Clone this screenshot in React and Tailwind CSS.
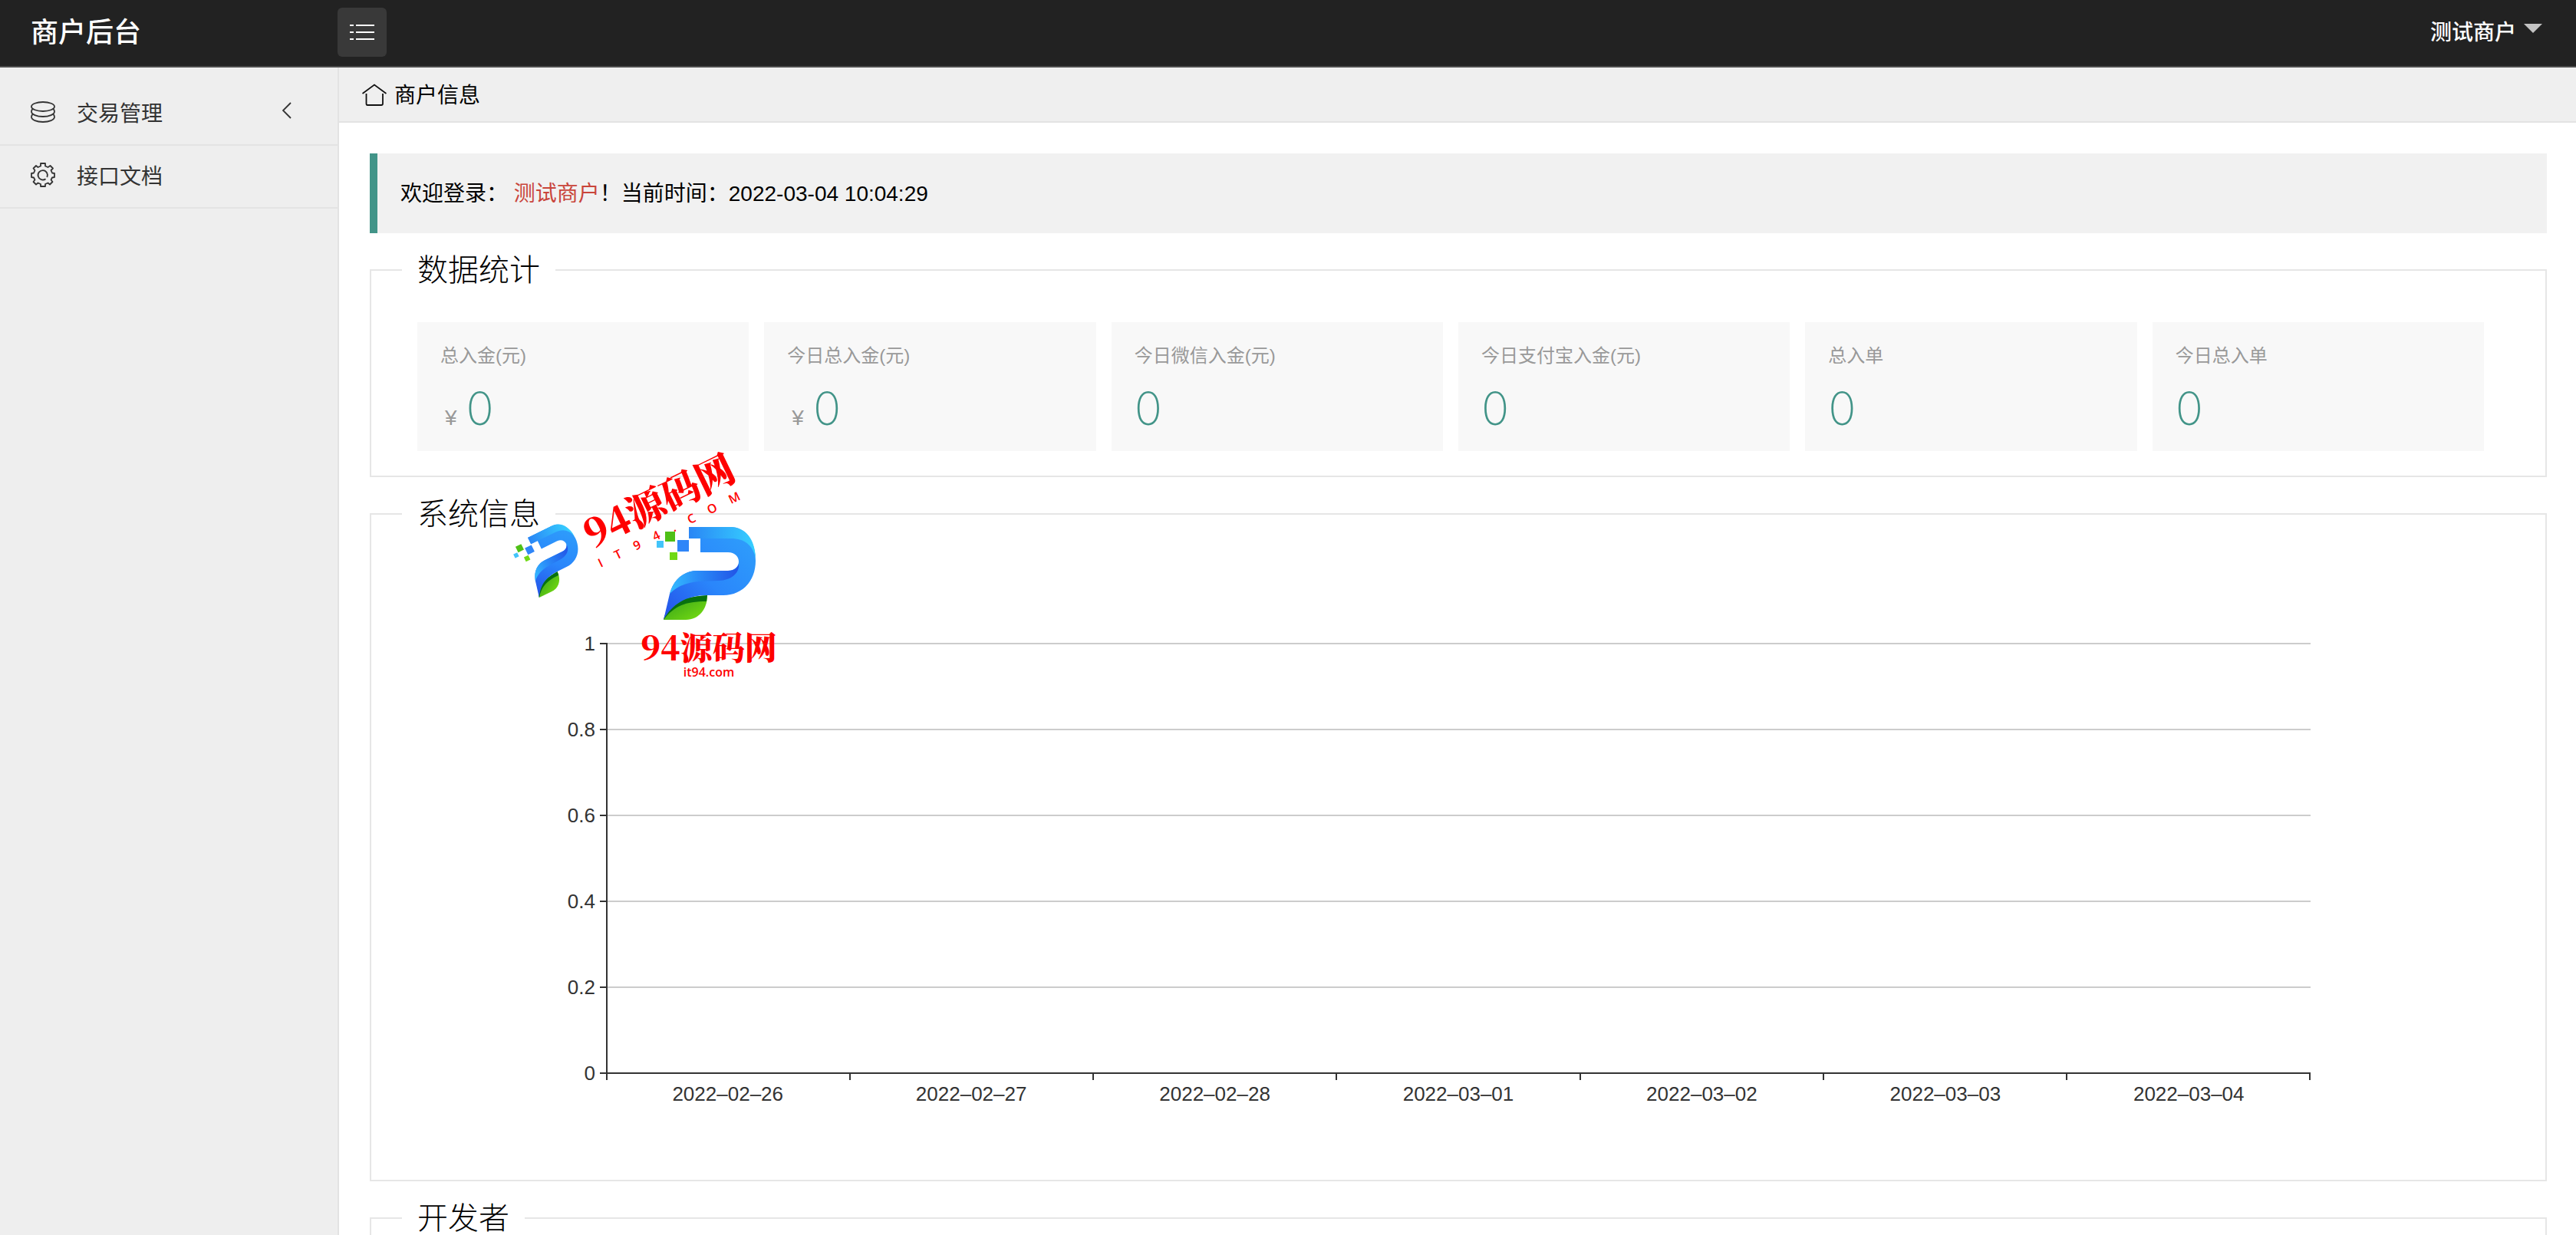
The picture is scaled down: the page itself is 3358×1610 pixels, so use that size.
const cards = [
  { label: '总入金(元)', value: '0', yen: true },
  { label: '今日总入金(元)', value: '0', yen: true },
  { label: '今日微信入金(元)', value: '0' },
  { label: '今日支付宝入金(元)', value: '0' },
  { label: '总入单', value: '0' },
  { label: '今日总入单', value: '0' },
];

const yTicks = ['1', '0.8', '0.6', '0.4', '0.2', '0'];
const days = ['2022–02–26', '2022–02–27', '2022–02–28', '2022–03–01', '2022–03–02', '2022–03–03', '2022–03–04'];

function DatabaseIcon() {
  return (
    <svg viewBox="0 0 32 28" className="mb-1 h-7 w-8" fill="none" stroke="#333" strokeWidth="1.8">
      <ellipse cx="16" cy="7" rx="15" ry="6" />
      <path d="M2.500 10C1.500 11 1 12 1 13.500 1 17 7.700 20 16 20s15-3 15-6.500c0-1.500-.5-2.500-1.500-3.500" />
      <path d="M2.500 17C1.500 18 1 19 1 20.500 1 24.200 7.700 27 16 27s15-2.800 15-6.500c0-1.500-.5-2.500-1.500-3.500" />
    </svg>
  );
}

function GearIcon() {
  return (
    <svg viewBox="0 0 32 32" className="mb-1 size-8" fill="none" stroke="#333" strokeWidth="1.8" strokeLinejoin="round">
      <path d="M13 1h6v3.500l3.500 1.500L25.500 4 29 7.500 26.500 10l1.500 3.500 3 .5v5l-3 .5-1.500 3L28.500 25 25 28.500 22.500 26.500 19 28v3h-6v-3l-3.500-1.500L7 28.500 3.500 25l2-2.500L4 19.500 1 19v-5l3-.5L5.500 10 3.500 7.500 7 4l2.500 2L13 4.500z" />
      <path d="M19.500 21.200A6.200 6.200 0 1 1 21.300 19" />
    </svg>
  );
}

function HomeIcon() {
  return (
    <svg viewBox="0 0 32 29" className="h-[29px] w-8" fill="none" stroke="#111" strokeWidth="1.800">
      <path d="M.5 13 16 1.500 31.500 13" />
      <path d="M5.500 13v13q0 2 1.500 2h18q2 0 2-2V13" />
    </svg>
  );
}

function LogoMark({ className }) {
  return (
    <svg viewBox="0 0 132 124" className={className} aria-hidden="true">
      <defs>
        <linearGradient id="bow" x1="0" y1="1" x2="1" y2="0">
          <stop offset="0" stopColor="#2450e8" />
          <stop offset=".45" stopColor="#2a86fb" />
          <stop offset="1" stopColor="#2fa2fb" />
        </linearGradient>
        <linearGradient id="shine" x1="0" y1="0" x2="1" y2="0">
          <stop offset="0" stopColor="#2a86f5" />
          <stop offset="1" stopColor="#36d0ff" />
        </linearGradient>
        <linearGradient id="fold" x1="0" y1="0" x2="1" y2="0">
          <stop offset="0" stopColor="#35bdff" />
          <stop offset=".4" stopColor="#2a8df8" />
          <stop offset="1" stopColor="#2253e6" />
        </linearGradient>
        <linearGradient id="leaf" x1="0" y1="0" x2="1" y2="1">
          <stop offset="0" stopColor="#2f9a1c" />
          <stop offset="1" stopColor="#79e010" />
        </linearGradient>
      </defs>
      <path d="M9 121C16 99 30 92 66 89c0 18-11 32-28 32z" fill="url(#leaf)" />
      <path d="M9 121c5-19 16-29 57-32l-1 8c-28 0-42 6-56 24z" fill="#08700f" />
      <path d="M42 0h54c20 0 33 18 33 44 0 27-18 45-42 45H66C38 89 20 101 9 121l8-34c5-19 19-30 36-30h40c9 0 14-6 14-12s-5-12-14-12H57V15H42z" fill="url(#bow)" />
      <path d="M42 0h54c20 0 32 16 33 40-4-16-14-25-32-25H42z" fill="url(#shine)" />
      <path d="M17 87c5-19 19-30 36-30h40c9 0 13-5 14-9 1 12-9 21-26 22-24 1-46-1-64 17z" fill="url(#fold)" />
      <rect x="27" y="17" width="15" height="15" fill="#2f86f8" />
      <rect x="11" y="6" width="13" height="13" fill="#4fc016" />
      <rect x="0" y="18" width="9" height="9" fill="#42c4fa" />
      <rect x="17" y="33" width="10" height="10" fill="#70d916" />
    </svg>
  );
}

function Watermark() {
  return (
    <div className="pointer-events-none absolute left-[184px] top-[-68px] h-[320px] w-[360px] font-['Noto_Serif_CJK_SC','Noto_Sans_CJK_SC',serif] text-[#fe0000]">
      <LogoMark className="absolute left-[190px] top-[107px] w-[132px]" />
      <LogoMark className="absolute left-[11px] top-[110px] w-[84px] -rotate-[26deg]" />
      <div className="absolute left-[86px] top-[46px] -rotate-[26deg] whitespace-nowrap text-[50px] leading-[48px] font-black">
        94源码网
      </div>
      <div className="absolute left-[104px] top-[100px] flex w-[204px] -rotate-[26deg] justify-between font-['Open_Sans',sans-serif] text-base leading-5 font-semibold">
        {'IT94.COM'.split('').map((c, i) => (
          <span key={i}>{c}</span>
        ))}
      </div>
      <div className="absolute left-[158px] top-[236px] w-[200px] text-center">
        <div className="whitespace-nowrap text-[42px] leading-[52px] font-black">94源码网</div>
        <div className="font-['Open_Sans',sans-serif] text-base leading-4 font-semibold">it94.com</div>
      </div>
    </div>
  );
}

function Panel({ title, className, children }) {
  return (
    <fieldset className={'min-w-0 border-2 border-[#e6e6e6] px-10 ' + className}>
      <legend className="px-5 text-[40px] leading-[44px] font-light text-black">{title}</legend>
      {children}
    </fieldset>
  );
}

function Chart() {
  return (
    <div className="px-[266px] pt-[146px] pb-24">
      <div className="relative h-[562px] border-l-2 border-[#333]">
        <div className="flex h-full flex-col justify-between">
          {yTicks.map((t) => (
            <div key={t} className="flex h-0.5 items-center">
              <div className={'h-0.5 flex-1 ' + (t === '0' ? 'bg-[#333]' : 'bg-[#ccc]')} />
            </div>
          ))}
        </div>
        <div className="absolute inset-y-0 right-full flex flex-col justify-between">
          {yTicks.map((t) => (
            <div key={t} className="flex h-0.5 items-center justify-end gap-1.5">
              <span>{t}</span>
              <span className="h-0.5 w-2.5 bg-[#333]" />
            </div>
          ))}
        </div>
      </div>
      <div className="flex border-l-2 border-[#333]">
        {days.map((d) => (
          <div key={d} className="flex h-2 flex-1 justify-end">
            <span className="w-0.5 bg-[#333]" />
          </div>
        ))}
      </div>
      <div className="flex pt-0.5">
        {days.map((d) => (
          <div key={d} className="flex-1 text-center leading-8">{d}</div>
        ))}
      </div>
    </div>
  );
}

export default function App() {
  return (
    <div className="flex h-screen flex-col overflow-hidden bg-white font-['Liberation_Sans','Noto_Sans_CJK_SC',sans-serif] text-[28px] text-black">
      <header className="flex h-[88px] shrink-0 items-center border-b-2 border-[#4d4d4d] bg-[#222] font-medium text-white">
        <h1 className="w-[440px] pl-10 text-4xl">商户后台</h1>
        <button aria-label="菜单" className="mb-0.5 flex size-16 items-center justify-center rounded-md bg-[#393939]">
          <svg viewBox="0 0 32 22" className="h-[22px] w-8" stroke="#fff" strokeWidth="2">
            <path d="M0 2h5M8 2h24M0 11h5M8 11h24M0 20h5M8 20h24" />
          </svg>
        </button>
        <button className="mr-11 ml-auto flex items-center gap-2.5">
          测试商户
          <svg viewBox="0 0 24 12" className="mb-3 h-3 w-6"><path d="M0 0h24L12 12z" fill="#c3c3c3" /></svg>
        </button>
      </header>
      <div className="flex min-h-0 flex-1">
        <nav className="w-[442px] shrink-0 border-r-2 border-[#e3e3e3] bg-[#eee] pt-5 text-[#333]">
          <a href="#trade" className="flex h-[82px] items-center gap-7 border-b-2 border-[#e3e3e3] pl-10">
            <DatabaseIcon />
            <span className="pt-0.5">交易管理</span>
            <svg viewBox="0 0 12 22" className="mr-[60px] mb-2 ml-auto h-[22px] w-3" fill="none" stroke="#333" strokeWidth="1.8"><path d="M11 1 1 11l10 10" /></svg>
          </a>
          <a href="#docs" className="flex h-[82px] items-center gap-7 border-b-2 border-[#e3e3e3] pl-10">
            <GearIcon />
            <span className="pt-0.5">接口文档</span>
          </a>
        </nav>
        <main className="flex min-w-0 flex-1 flex-col">
          <div className="flex h-[72px] shrink-0 items-center gap-2.5 border-b-2 border-[#e3e3e3] bg-[#efefef] pl-[30px]">
            <HomeIcon />
            <span className="pt-1">商户信息</span>
          </div>
          <div className="min-h-0 flex-1 overflow-hidden pt-10 pr-[38px] pl-10">
            <p className="flex h-[104px] items-center border-l-[10px] border-[#429488] bg-[#f1f1f1] pt-0.5 pl-[30px] whitespace-pre">
              欢迎登录： <span className="text-[#c9453b]">测试商户</span>！当前时间：2022-03-04 10:04:29
            </p>
            <Panel title="数据统计" className="mt-[26px]">
              <div className="mb-8 grid grid-cols-6 gap-5 pt-[46px] pr-10 pl-5">
                {cards.map((c) => (
                  <div key={c.label} className="h-[168px] bg-[#f8f8f8] px-[30px] pt-7 text-[#999]">
                    <h3 className="text-2xl leading-8">{c.label}</h3>
                    <p className="flex items-baseline gap-3 pt-4 leading-[72px]">
                      {c.yen && <span className="pl-1.5 text-[28px]">¥</span>}
                      <span className="font-['Inter',sans-serif] text-6xl leading-[72px] font-extralight text-[#429488]">{c.value}</span>
                    </p>
                  </div>
                ))}
              </div>
            </Panel>
            <div className="relative mt-[26px]">
              <Panel title="系统信息" className="text-[26px] text-[#333]">
                <Chart />
              </Panel>
              <Watermark />
            </div>
            <Panel title="开发者" className="mt-[26px] h-40" />
          </div>
        </main>
      </div>
    </div>
  );
}
